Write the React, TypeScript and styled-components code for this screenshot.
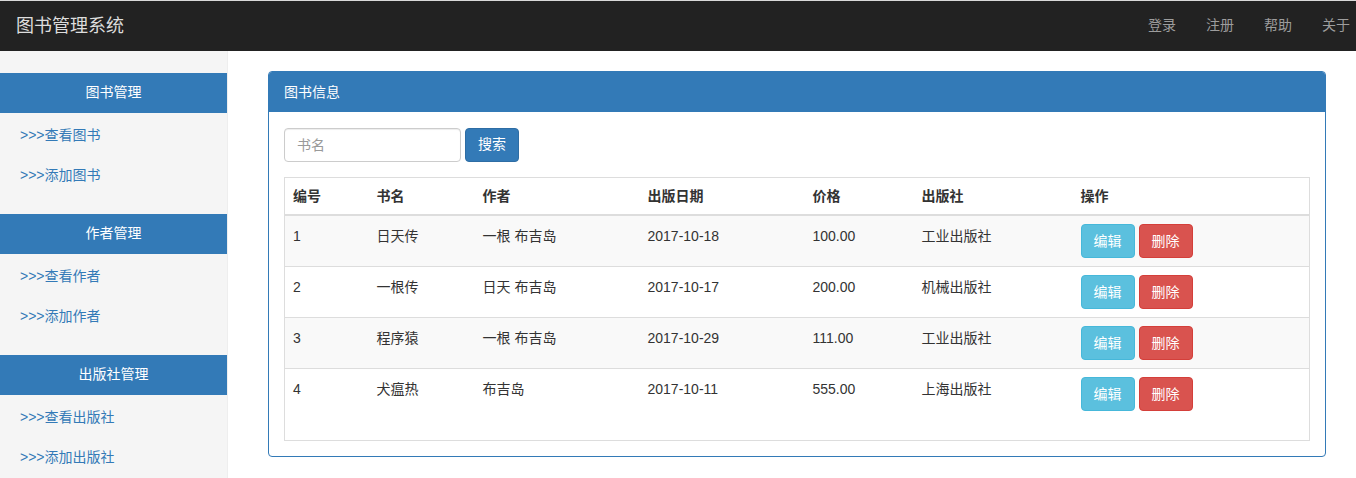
import React from 'react';
import styled, { createGlobalStyle } from 'styled-components';

const GlobalStyle = createGlobalStyle`
  html, body {
    margin: 0;
    padding: 0;
    background: #fff;
    font-family: "Liberation Sans", "Noto Sans CJK SC", Arial, sans-serif;
    font-size: 14px;
    line-height: 1.42857;
    color: #333;
  }
  * { box-sizing: border-box; }
`;

const Page = styled.div`
  min-height: 100vh;
  display: flex;
  flex-direction: column;
  border-top: 1px solid #d9d9d9;
`;

const Navbar = styled.nav`
  height: 50px;
  background: #222;
  display: flex;
  align-items: center;
  justify-content: space-between;
  padding: 0 6px 0 16px;
`;

const Brand = styled.div`
  font-size: 18px;
  color: #ddd;
  line-height: 20px;
`;

const NavLinks = styled.div`
  display: flex;
  gap: 30px;
`;

const NavLink = styled.a`
  color: #9d9d9d;
  font-size: 14px;
  text-decoration: none;
  cursor: pointer;
`;

const Body = styled.div`
  flex: 1;
  display: flex;
`;

const Sidebar = styled.aside`
  width: 228px;
  flex-shrink: 0;
  background: #f5f5f5;
  border-right: 1px solid #eee;
  padding-top: 22px;
  display: flex;
  flex-direction: column;
  gap: 21px;
`;

const MenuGroup = styled.div`
  display: flex;
  flex-direction: column;
`;

const MenuHeading = styled.div`
  height: 40px;
  background: #337ab7;
  color: #fff;
  display: flex;
  align-items: center;
  justify-content: center;
`;

const MenuLink = styled.a`
  height: 40px;
  display: flex;
  align-items: center;
  padding: 5px 0 0 20px;
  color: #337ab7;
  text-decoration: none;
  cursor: pointer;
`;

const Main = styled.main`
  flex: 1;
  padding: 20px 30px 20px 40px;
`;

const Panel = styled.section`
  border: 1px solid #337ab7;
  border-radius: 4px;
  background: #fff;
`;

const PanelHeading = styled.div`
  background: #337ab7;
  color: #fff;
  padding: 10px 15px;
  line-height: 20px;
  border-top-left-radius: 3px;
  border-top-right-radius: 3px;
`;

const PanelBody = styled.div`
  padding: 15px;
`;

const SearchForm = styled.form`
  display: flex;
  gap: 4px;
  margin: 1px 0 15px;
`;

const Input = styled.input`
  width: 177px;
  height: 34px;
  padding: 6px 12px;
  border: 1px solid #ccc;
  border-radius: 4px;
  font: inherit;
  color: #555;
  box-shadow: inset 0 1px 1px rgba(0, 0, 0, 0.075);
  &::placeholder { color: #999; }
`;

const Button = styled.button<{ $variant: 'primary' | 'info' | 'danger' }>`
  height: 34px;
  padding: 6px 12px;
  border-radius: 4px;
  font: inherit;
  color: #fff;
  cursor: pointer;
  background: ${p => (p.$variant === 'primary' ? '#337ab7' : p.$variant === 'info' ? '#5bc0de' : '#d9534f')};
  border: 1px solid ${p => (p.$variant === 'primary' ? '#2e6da4' : p.$variant === 'info' ? '#46b8da' : '#d43f3a')};
`;

const Table = styled.table`
  width: 100%;
  border-collapse: collapse;
  border: 1px solid #ddd;
  table-layout: fixed;
`;

const Th = styled.th<{ $w?: number }>`
  width: ${p => (p.$w ? `${p.$w}px` : 'auto')};
  text-align: left;
  font-weight: bold;
  padding: 8px;
  line-height: 20px;
  border-bottom: 2px solid #ddd;
`;

const Tr = styled.tr<{ $striped: boolean; $last: boolean }>`
  background: ${p => (p.$striped ? '#f9f9f9' : '#fff')};
  border-top: 1px solid #ddd;
  td { padding-bottom: ${p => (p.$last ? '29px' : '8px')}; }
`;

const Td = styled.td`
  padding: 10px 8px 8px;
  line-height: 20px;
  vertical-align: top;
`;

const Actions = styled.div`
  display: flex;
  gap: 4px;
  margin-top: -2px;
`;

const menus = [
  { title: '图书管理', links: ['>>>查看图书', '>>>添加图书'] },
  { title: '作者管理', links: ['>>>查看作者', '>>>添加作者'] },
  { title: '出版社管理', links: ['>>>查看出版社', '>>>添加出版社'] },
];

const columns = [
  { label: '编号', w: 84 },
  { label: '书名', w: 106 },
  { label: '作者', w: 165 },
  { label: '出版日期', w: 165 },
  { label: '价格', w: 109 },
  { label: '出版社', w: 159 },
  { label: '操作' },
];

const books = [
  { id: 1, name: '日天传', author: '一根 布吉岛', date: '2017-10-18', price: '100.00', press: '工业出版社' },
  { id: 2, name: '一根传', author: '日天 布吉岛', date: '2017-10-17', price: '200.00', press: '机械出版社' },
  { id: 3, name: '程序猿', author: '一根 布吉岛', date: '2017-10-29', price: '111.00', press: '工业出版社' },
  { id: 4, name: '犬瘟热', author: '布吉岛', date: '2017-10-11', price: '555.00', press: '上海出版社' },
];

const App: React.FC = () => (
  <>
    <GlobalStyle />
    <Page>
      <Navbar>
        <Brand>图书管理系统</Brand>
        <NavLinks>
          {['登录', '注册', '帮助', '关于'].map(t => (
            <NavLink key={t}>{t}</NavLink>
          ))}
        </NavLinks>
      </Navbar>
      <Body>
        <Sidebar>
          {menus.map(m => (
            <MenuGroup key={m.title}>
              <MenuHeading>{m.title}</MenuHeading>
              {m.links.map(l => (
                <MenuLink key={l}>{l}</MenuLink>
              ))}
            </MenuGroup>
          ))}
        </Sidebar>
        <Main>
          <Panel>
            <PanelHeading>图书信息</PanelHeading>
            <PanelBody>
              <SearchForm onSubmit={e => e.preventDefault()}>
                <Input placeholder="书名" />
                <Button $variant="primary" type="submit">搜索</Button>
              </SearchForm>
              <Table>
                <thead>
                  <tr>
                    {columns.map(c => (
                      <Th key={c.label} $w={c.w}>{c.label}</Th>
                    ))}
                  </tr>
                </thead>
                <tbody>
                  {books.map((b, i) => (
                    <Tr key={b.id} $striped={i % 2 === 0} $last={i === books.length - 1}>
                      <Td>{b.id}</Td>
                      <Td>{b.name}</Td>
                      <Td>{b.author}</Td>
                      <Td>{b.date}</Td>
                      <Td>{b.price}</Td>
                      <Td>{b.press}</Td>
                      <Td>
                        <Actions>
                          <Button $variant="info">编辑</Button>
                          <Button $variant="danger">删除</Button>
                        </Actions>
                      </Td>
                    </Tr>
                  ))}
                </tbody>
              </Table>
            </PanelBody>
          </Panel>
        </Main>
      </Body>
    </Page>
  </>
);

export default App;
